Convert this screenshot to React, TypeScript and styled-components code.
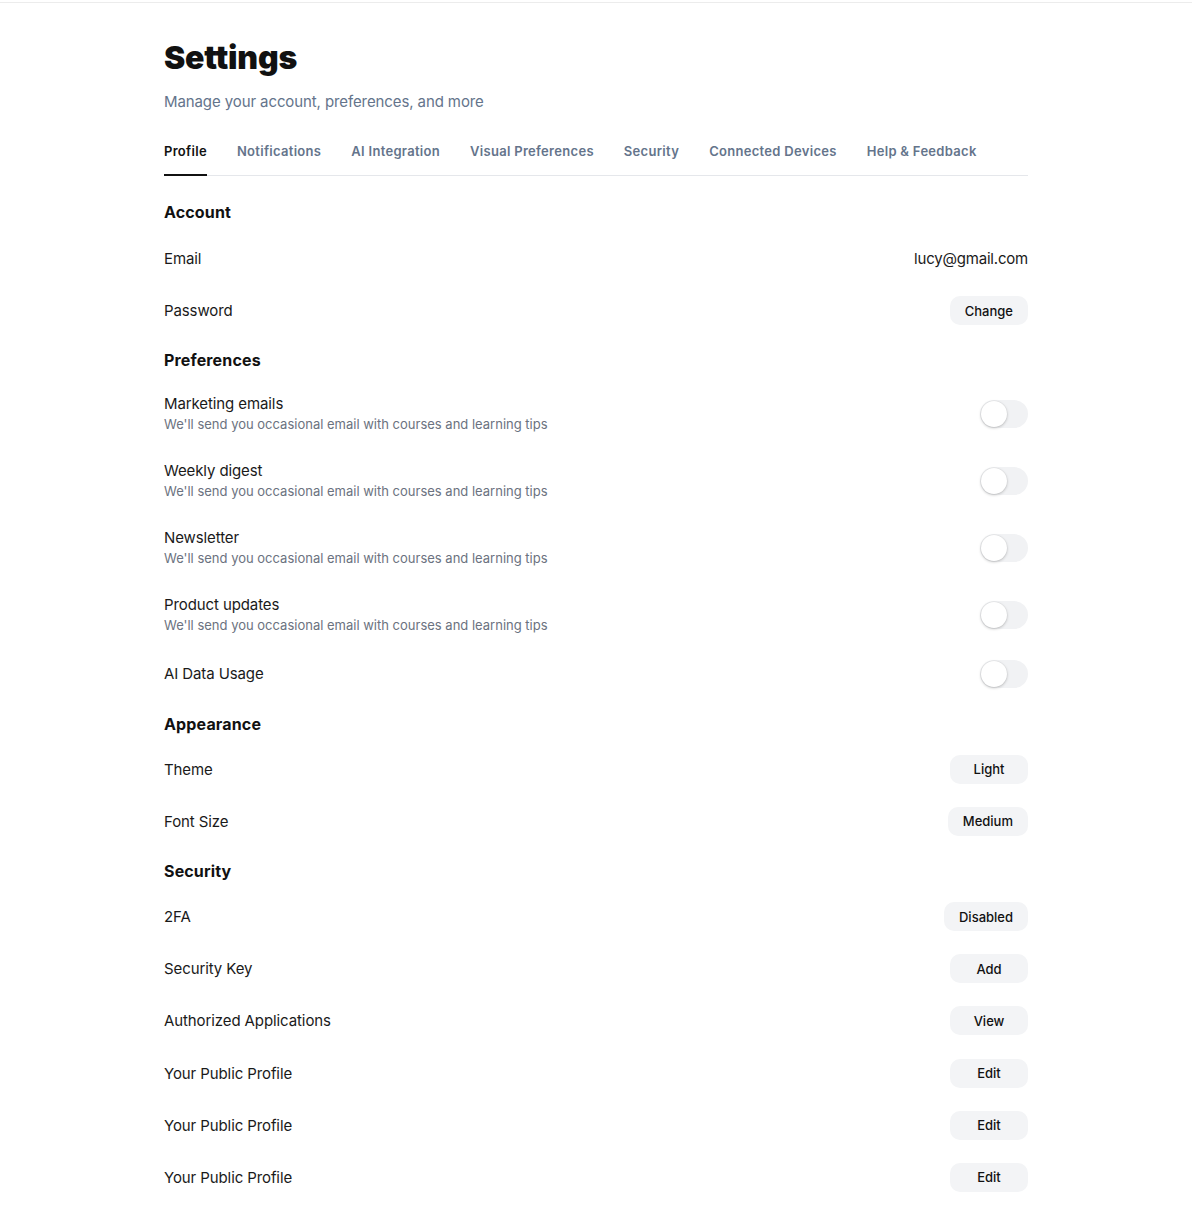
import React from "react";
import styled, { createGlobalStyle } from "styled-components";

const Global = createGlobalStyle`
  html, body { margin: 0; padding: 0; background: #ffffff; }
  body { font-family: Inter, "Noto Sans", "Liberation Sans", sans-serif; color: #111827; -webkit-font-smoothing: antialiased; }
  * { box-sizing: border-box; }
`;

const TopRule = styled.div`
  height: 3px;
  border-bottom: 1px solid #ececec;
`;

const Page = styled.main`
  width: 864px;
  margin: 0 auto;
  padding: 35px 0 40px;
`;

const Title = styled.h1`
  margin: 0 0 13px;
  font-size: 32px;
  line-height: 40px;
  font-weight: 900;
  letter-spacing: -0.2px;
  color: #111111;
`;

const Subtitle = styled.p`
  margin: 0 0 28px;
  font-size: 15px;
  line-height: 22px;
  letter-spacing: -0.1px;
  color: #64748b;
`;

const TabList = styled.nav`
  display: flex;
  gap: 30px;
  border-bottom: 1px solid #e5e7eb;
  margin-bottom: 24px;
`;

const Tab = styled.div<{ $active?: boolean }>`
  font-size: 13px;
  line-height: 20px;
  font-weight: 600;
  letter-spacing: 0.3px;
  padding-bottom: 13px;
  margin-bottom: -1px;
  color: ${(p) => (p.$active ? "#111111" : "#64748b")};
  border-bottom: 2px solid ${(p) => (p.$active ? "#111111" : "transparent")};
`;

const SectionTitle = styled.h2<{ $first?: boolean }>`
  margin: ${(p) => (p.$first ? "0 0 9px" : "11px 0 8px")};
  font-size: 16px;
  line-height: 24px;
  font-weight: 700;
  letter-spacing: 0.15px;
  color: #111111;
`;

const Row = styled.div<{ $tall?: boolean }>`
  display: flex;
  align-items: center;
  justify-content: space-between;
  min-height: ${(p) => (p.$tall ? "67px" : "52.2px")};
`;

const LabelBlock = styled.div`
  display: flex;
  flex-direction: column;
  gap: 1px;
`;

const Label = styled.span`
  font-size: 15px;
  line-height: 20px;
  letter-spacing: -0.1px;
  color: #1a1a1a;
`;

const Desc = styled.span`
  font-size: 13px;
  line-height: 18px;
  color: #6b7280;
`;

const Value = styled.span`
  font-size: 15px;
  line-height: 20px;
  letter-spacing: -0.2px;
  color: #1a1a1a;
`;

const Pill = styled.button`
  min-width: 78px;
  height: 29px;
  padding: 0 15px;
  margin-top: -1px;
  border: none;
  border-radius: 10px;
  background: #f3f4f6;
  font-family: inherit;
  font-size: 13px;
  font-weight: 500;
  color: #111111;
  cursor: pointer;
`;

const Track = styled.div`
  position: relative;
  width: 48px;
  height: 28px;
  border-radius: 14px;
  background: #f1f2f4;
`;

const Knob = styled.div`
  position: absolute;
  top: 1px;
  left: 1px;
  width: 26px;
  height: 26px;
  border-radius: 50%;
  background: #ffffff;
  box-shadow: 0 1px 3px rgba(0, 0, 0, 0.22), 0 0 0 0.5px rgba(0, 0, 0, 0.05);
`;

const Toggle = () => (
  <Track>
    <Knob />
  </Track>
);

const tabs = [
  "Profile",
  "Notifications",
  "AI Integration",
  "Visual Preferences",
  "Security",
  "Connected Devices",
  "Help & Feedback",
];

const desc = "We'll send you occasional email with courses and learning tips";

export default function App() {
  return (
    <>
      <Global />
      <TopRule />
      <Page>
        <Title>Settings</Title>
        <Subtitle>Manage your account, preferences, and more</Subtitle>
        <TabList>
          {tabs.map((t, i) => (
            <Tab key={t} $active={i === 0}>
              {t}
            </Tab>
          ))}
        </TabList>

        <SectionTitle $first>Account</SectionTitle>
        <Row>
          <Label>Email</Label>
          <Value>lucy@gmail.com</Value>
        </Row>
        <Row>
          <Label>Password</Label>
          <Pill>Change</Pill>
        </Row>

        <SectionTitle>Preferences</SectionTitle>
        {["Marketing emails", "Weekly digest", "Newsletter", "Product updates"].map((t) => (
          <Row $tall key={t}>
            <LabelBlock>
              <Label>{t}</Label>
              <Desc>{desc}</Desc>
            </LabelBlock>
            <Toggle />
          </Row>
        ))}
        <Row>
          <Label>AI Data Usage</Label>
          <Toggle />
        </Row>

        <SectionTitle>Appearance</SectionTitle>
        <Row>
          <Label>Theme</Label>
          <Pill>Light</Pill>
        </Row>
        <Row>
          <Label>Font Size</Label>
          <Pill>Medium</Pill>
        </Row>

        <SectionTitle>Security</SectionTitle>
        <Row>
          <Label>2FA</Label>
          <Pill>Disabled</Pill>
        </Row>
        <Row>
          <Label>Security Key</Label>
          <Pill>Add</Pill>
        </Row>
        <Row>
          <Label>Authorized Applications</Label>
          <Pill>View</Pill>
        </Row>
        <Row>
          <Label>Your Public Profile</Label>
          <Pill>Edit</Pill>
        </Row>
        <Row>
          <Label>Your Public Profile</Label>
          <Pill>Edit</Pill>
        </Row>
        <Row>
          <Label>Your Public Profile</Label>
          <Pill>Edit</Pill>
        </Row>
      </Page>
    </>
  );
}
